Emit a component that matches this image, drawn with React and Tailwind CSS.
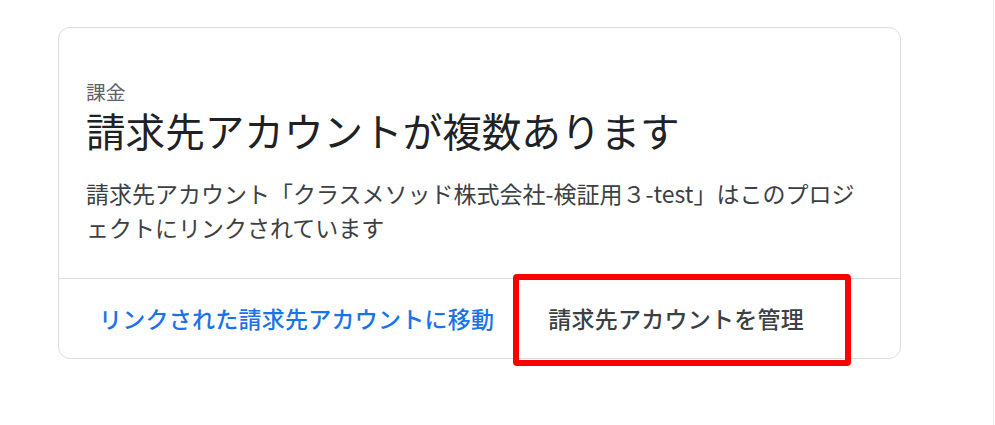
export default function App() {
  return (
    <div className="w-[995px] h-[425px] bg-white flex font-['Noto_Sans_CJK_JP','Noto_Sans',sans-serif]">
      <div className="w-[993px] pl-[58px] pt-[27px]">
        <div className="relative w-[843px] rounded-[12px] border border-[#dadce0] bg-white">
          <div className="px-[27px] pt-[54px] pb-[34px]">
            <div className="text-[19.8px] leading-[20px] text-[#5f6368]">課金</div>
            <div className="mt-[5px] text-[39.6px] leading-[46px] text-[#202124]">
              請求先アカウントが複数あります
            </div>
            <p className="mt-[22.5px] text-[23px] leading-[34px] text-[#3c4043]">
              請求先アカウント「クラスメソッド株式会社-検証用３-test」はこのプロジェクトにリンクされています
            </p>
          </div>
          <div className="h-[80px] border-t border-[#dadce0] flex items-center pl-[27px] gap-[28px]">
            <button className="px-[13px] text-[23px] leading-[34px] font-medium tracking-[0.25px] text-[#1a73e8]">
              リンクされた請求先アカウントに移動
            </button>
            <button className="px-[13px] text-[23px] leading-[34px] font-medium tracking-[0.25px] text-[#3c4043]">
              請求先アカウントを管理
            </button>
          </div>
          <div className="absolute left-[454px] top-[246px] w-[338px] h-[92px] border-[6px] border-[#ff0000] rounded-[4px] pointer-events-none"></div>
        </div>
      </div>
      <div className="w-px h-full bg-[#e8eaed]"></div>
    </div>
  );
}
